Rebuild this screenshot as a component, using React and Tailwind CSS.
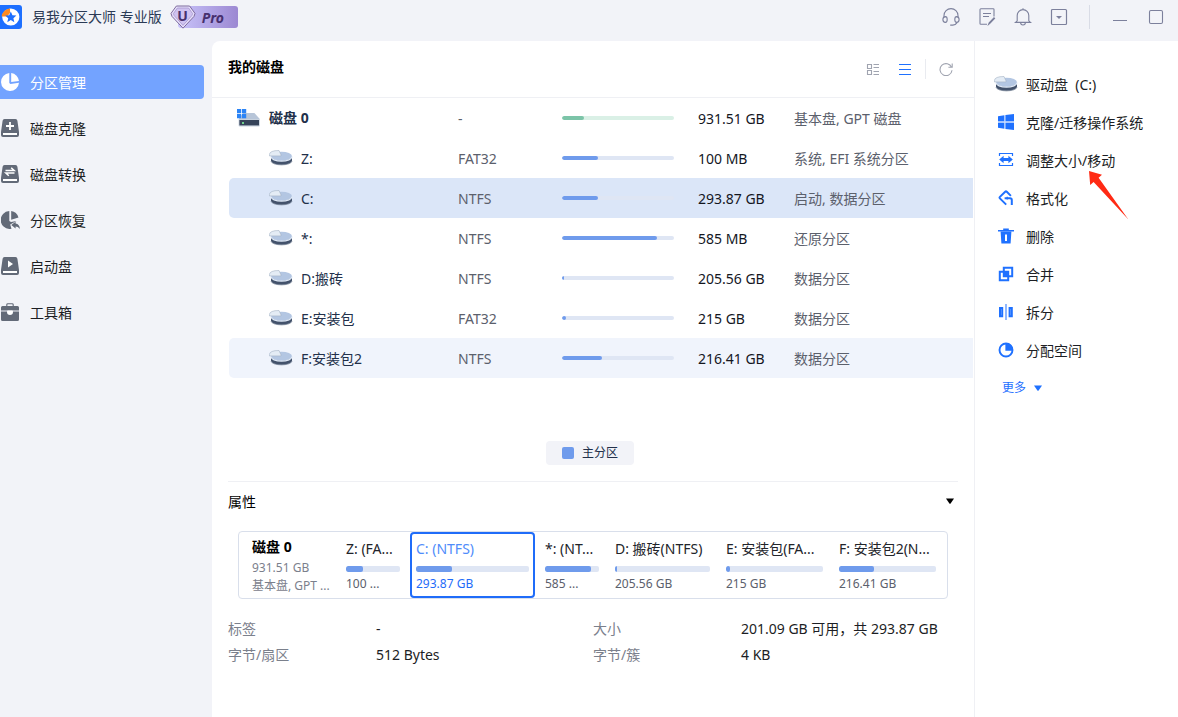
import React, { useState } from "react";

const SIDE_ITEMS = [
  { id: "manage", label: "分区管理", icon: PieIcon },
  { id: "clone", label: "磁盘克隆", icon: CloneIcon },
  { id: "convert", label: "磁盘转换", icon: ConvertIcon },
  { id: "recover", label: "分区恢复", icon: RecoverIcon },
  { id: "boot", label: "启动盘", icon: BootIcon },
  { id: "tools", label: "工具箱", icon: ToolboxIcon },
];

const PARTITIONS = [
  { id: "z", name: "Z:", fs: "FAT32", size: "100 MB", used: 32, type: "系统, EFI 系统分区" },
  { id: "c", name: "C:", fs: "NTFS", size: "293.87 GB", used: 32, type: "启动, 数据分区" },
  { id: "star", name: "*:", fs: "NTFS", size: "585 MB", used: 85, type: "还原分区" },
  { id: "d", name: "D:搬砖", fs: "NTFS", size: "205.56 GB", used: 2, type: "数据分区" },
  { id: "e", name: "E:安装包", fs: "FAT32", size: "215 GB", used: 4, type: "数据分区" },
  { id: "f", name: "F:安装包2", fs: "NTFS", size: "216.41 GB", used: 36, type: "数据分区" },
];

const SEGMENTS = [
  { id: "z", title: "Z: (FA...", size: "100 ...", used: 32, grow: "grow-[54]" },
  { id: "c", title: "C: (NTFS)", size: "293.87 GB", used: 32, grow: "grow-[113]" },
  { id: "star", title: "*: (NT...", size: "585 ...", used: 85, grow: "grow-[54]" },
  { id: "d", title: "D: 搬砖(NTFS)", size: "205.56 GB", used: 2, grow: "grow-[95]" },
  { id: "e", title: "E: 安装包(FA...", size: "215 GB", used: 4, grow: "grow-[97]" },
  { id: "f", title: "F: 安装包2(N...", size: "216.41 GB", used: 36, grow: "grow-[97]" },
];

const ACTIONS = [
  { label: "克隆/迁移操作系统", icon: WindowsIcon },
  { label: "调整大小/移动", icon: ResizeIcon, pointer: true },
  { label: "格式化", icon: FormatIcon },
  { label: "删除", icon: DeleteIcon },
  { label: "合并", icon: MergeIcon },
  { label: "拆分", icon: SplitIcon },
  { label: "分配空间", icon: AllocateIcon },
];

/* ---- sidebar icons ---- */

function PieIcon() {
  return (
    <svg width="18" height="18" viewBox="0 0 18 18" fill="currentColor" aria-hidden="true">
      <path d="M8.3 0A9 9 0 1 0 18 9.7L9.4 11 8.3 10Z" />
      <path d="M10.2 0A9 9 0 0 1 18 8L10.2 9Z" />
    </svg>
  );
}

function DiskBase({ children }) {
  return (
    <svg width="18" height="18" viewBox="0 0 18 18" aria-hidden="true">
      <path d="M3.6 0H14.4a2 2 0 0 1 2 1.7L18 13v3a2 2 0 0 1-2 2H2a2 2 0 0 1-2-2v-3L1.6 1.7A2 2 0 0 1 3.6 0Z" fill="currentColor" />
      <path d="M2 14H16V16H2Z" fill="#fff" />
      {children}
    </svg>
  );
}

function CloneIcon() {
  return (
    <DiskBase>
      <path d="M9 3V11M5 7H13" stroke="#fff" strokeWidth="1.8" />
    </DiskBase>
  );
}

function ConvertIcon() {
  return (
    <DiskBase>
      <path d="M4.5 5.6H13.2L10.2 2.8M13.5 8H4.8L7.8 10.8" fill="none" stroke="#fff" strokeWidth="1.5" />
    </DiskBase>
  );
}

function RecoverIcon() {
  return (
    <svg width="19" height="18" viewBox="0 0 19 18" fill="currentColor" aria-hidden="true">
      <path d="M8.3 0A9 9 0 0 0 9 18L10.5 17.8 9.2 13.5 15.5 9.9 10 11 8.3 10Z" />
      <path d="M10.2 0A9 9 0 0 1 17.5 6.4L10.2 8.8Z" />
      <path d="M10.3 14 14.6 10.7V12.6Q18.6 13.2 18.9 18 17 15.6 14.6 15.6V17.4Z" />
    </svg>
  );
}

function BootIcon() {
  return (
    <DiskBase>
      <path d="M7 3.6 12 7 7 10.4Z" fill="#fff" />
    </DiskBase>
  );
}

function ToolboxIcon() {
  return (
    <svg width="18" height="18" viewBox="0 0 18 18" aria-hidden="true">
      <path d="M5.8 3V1.6A1 1 0 0 1 6.8.7H11.2A1 1 0 0 1 12.2 1.6V3" fill="none" stroke="currentColor" strokeWidth="1.1" />
      <path d="M1.5 3H16.5A1.5 1.5 0 0 1 18 4.5V7.4H0V4.5A1.5 1.5 0 0 1 1.5 3Z" fill="currentColor" />
      <path d="M0 8.6H6V9A3 3 0 0 0 12 9V8.6H18V16.5A1.5 1.5 0 0 1 16.5 18H1.5A1.5 1.5 0 0 1 0 16.5Z" fill="currentColor" />
      <path d="M6.4 7.4H11.6V9A2.6 2.4 0 0 1 6.4 9Z" fill="#fff" />
    </svg>
  );
}

/* ---- action icons ---- */

function WindowsIcon() {
  return (
    <svg width="16" height="16" viewBox="0 0 16 16" fill="#1f71ff" aria-hidden="true">
      <path d="M0 2.2 6.4 1.3V7.2H0ZM7.4 1.1 16 0V7.2H7.4ZM0 8.7H6.4V14.7L0 13.8ZM7.4 8.7H16V16L7.4 14.9Z" />
      <path d="M0 7.2H16V8.7H0Z" opacity=".25" />
    </svg>
  );
}

function ResizeIcon() {
  return (
    <svg width="16" height="16" viewBox="0 0 16 16" aria-hidden="true">
      <path d="M1.5 4V1.5H14.5V4M1.5 11V13.5H14.5V11" fill="none" stroke="#1f71ff" strokeWidth="1.2" />
      <path d="M1.2 7.5 5.6 3.8V6H10.4V3.8L14.8 7.5 10.4 11.2V9H5.6V11.2Z" fill="#1f71ff" />
    </svg>
  );
}

function FormatIcon() {
  return (
    <svg width="16" height="16" viewBox="0 0 16 16" fill="none" stroke="#1f71ff" strokeWidth="2" aria-hidden="true">
      <path d="M8.2 14.6 1.9 8.4Q1.2 7.6 1.9 6.9L7.2 1.8Q8 1 8.8 1.8L12.9 5.9" />
      <path d="M6.6 8.2H12Q13.8 8.2 13.8 10V15" />
      <path d="M9.2 6.8V9.6" strokeWidth="1.2" />
    </svg>
  );
}

function DeleteIcon() {
  return (
    <svg width="16" height="16" viewBox="0 0 16 16" fill="#1f71ff" aria-hidden="true">
      <path d="M0 2H5.2V.6H10.8V2H16V3.4H0Z" />
      <path fillRule="evenodd" d="M2.6 3.4H13.4L12.6 15.4H3.4ZM7 6.4V13H9V6.4Z" />
    </svg>
  );
}

function MergeIcon() {
  return (
    <svg width="16" height="16" viewBox="0 0 16 16" aria-hidden="true">
      <path d="M5.8 1.8H14.2V10.2H5.8ZM1.8 5.8H10.2V14.2H1.8Z" fill="none" stroke="#1f71ff" strokeWidth="2" />
      <path d="M5.8 5.8H10.2V10.2H5.8Z" fill="#1f71ff" />
    </svg>
  );
}

function SplitIcon() {
  return (
    <svg width="16" height="16" viewBox="0 0 16 16" aria-hidden="true">
      <path d="M2 4H4.2V12.2H2ZM11.6 4H13.8V12.2H11.6Z" fill="none" stroke="#1f71ff" strokeWidth="2" />
      <path d="M7 0H9V16H7Z" fill="#8fb8ff" />
    </svg>
  );
}

function AllocateIcon() {
  return (
    <svg width="16" height="16" viewBox="0 0 16 16" aria-hidden="true">
      <circle cx="8" cy="8" r="6.5" fill="none" stroke="#1f71ff" strokeWidth="1.9" />
      <path d="M7.4 1H9A7 7 0 0 1 15 8.8H7.4Z" fill="#1f71ff" />
    </svg>
  );
}

/* ---- disk drawings ---- */

function DriveIcon() {
  return (
    <svg width="24" height="16" viewBox="0 0 24 16" className="shrink-0" aria-hidden="true">
      <path d="M2 6.8V11A10.6 4.4 0 0 0 23 11V6.8Z" fill="#43526b" />
      <path d="M2 11.4A10.6 4 0 0 0 23 11.4" fill="none" stroke="#66748a" strokeWidth=".7" />
      <ellipse cx="12.5" cy="6.3" rx="10.5" ry="4.6" fill="#b3c6e2" />
      <path d="M2 6.6A10.5 4.6 0 0 0 23 6.6" fill="none" stroke="#dfe9f6" strokeWidth="1.2" />
      <path d="M.4 4.4Q.8 .5 10 .5L12 4.8V5.9H.4Z" fill="#e4ecf5" stroke="#a3b2c4" strokeWidth=".6" />
    </svg>
  );
}

function DiskIcon() {
  return (
    <svg width="24" height="18" viewBox="0 0 24 18" className="shrink-0" aria-hidden="true">
      <path d="M6 4H17.4L22.8 10H1.6Z" fill="#b7c5d8" />
      <path d="M1.6 10H22.8V16.6A1 1 0 0 1 21.8 17.6H2.6A1 1 0 0 1 1.6 16.6Z" fill="#c8d2de" />
      <path d="M2.4 11H22V16.4H2.4Z" fill="#364359" />
      <path d="M5 13H7V15H5Z" fill="#6fd08c" />
      <path d="M0 0H4.2V4.2H0ZM5 0H9.2V4.2H5ZM0 5H4.2V9.2H0ZM5 5H9.2V9.2H5Z" fill="#2b84f6" />
    </svg>
  );
}

function Logo() {
  return (
    <svg width="22" height="24" viewBox="2 0 22 24" aria-hidden="true">
      <rect width="24" height="24" rx="3" fill="#1d6fff" />
      <circle cx="12.8" cy="12" r="8.6" fill="#fff" />
      <path d="M3.6 11.6A9 9 0 0 1 12 3.4V8L9 11.6Z" fill="#ff8a1e" />
      <path d="M12.8 6.6 14.4 10.2 18.4 10.6 15.4 13.2 16.3 17.2 12.8 15.1 9.3 17.2 10.2 13.2 7.2 10.6 11.2 10.2Z" fill="#1d6fff" />
    </svg>
  );
}

function ProBadge() {
  return (
    <span className="relative ml-2 flex h-6 items-center pl-2">
      <span className="flex h-[22px] items-center rounded-[3px] bg-linear-to-r from-[#c9c4fa] to-[#9c88d2] pr-[14px] pl-6 text-[14px] font-bold text-[#47306e] italic">
        Pro
      </span>
      <span className="absolute top-0 left-0 flex h-6 w-[26px] justify-center">
        <svg width="26" height="24" viewBox="0 0 26 24" className="absolute inset-0" aria-hidden="true">
          <path d="M6.4 1H19.6L25 8.4 24 11.4 13 23.2 2 11.4 1 8.4Z" fill="#e7e0fb" stroke="#7d6a9c" />
          <path d="M7.4 3H18.6L22.6 8.6 21.8 10.6 13 20.4 4.2 10.6 3.4 8.6Z" fill="#cfc2f0" stroke="#a595cb" strokeWidth=".8" />
        </svg>
        <span className="relative text-[14px] leading-[21px] font-bold text-[#47306e]">U</span>
      </span>
    </span>
  );
}

function Triangle({ className }) {
  return (
    <svg width="8" height="6" viewBox="0 0 8 6" fill="currentColor" className={className} aria-hidden="true">
      <path d="M0 .4H8L4.6 5.4Q4 6 3.4 5.4Z" />
    </svg>
  );
}

function Meter({ used, green, thick }) {
  const track = green ? "bg-[#daf0e6]" : "bg-[#dfe6f4]";
  const fill = green ? "bg-[#7cc4a8]" : "bg-[#6f9bec]";
  return (
    <div className={`w-full overflow-hidden rounded-[2px] ${thick ? "h-[6px]" : "h-1"} ${track}`}>
      <div className={`h-full rounded-[2px] ${fill}`} style={{ width: `${used}%` }} />
    </div>
  );
}

function TitleBar() {
  return (
    <header className="flex h-[41px] items-start justify-between pt-[5px]">
      <div className="flex h-6 items-center">
        <Logo />
        <h1 className="ml-[10px] pb-[2px] text-[14px] text-[#2b3a55]">易我分区大师 专业版</h1>
        <ProBadge />
      </div>
      <div className="flex h-6 items-center gap-[18px] pr-[13px] text-[#7c809c]">
        <button type="button" aria-label="客服">
          <svg width="18" height="18" viewBox="0 0 18 18" fill="none" stroke="currentColor" strokeWidth="1.1" aria-hidden="true">
            <path d="M2 9.2V7.6A7 7 0 0 1 16 7.6V9.2" />
            <path d="M3.4 8.6C1.6 8.8 .9 10 .9 11.4S2 14.2 3.4 14.4C4.8 14.4 5.2 13.6 5.2 11.5S4.8 8.6 3.4 8.6ZM14.6 8.6C16.4 8.8 17.1 10 17.1 11.4S16 14.2 14.6 14.4C13.2 14.4 12.8 13.6 12.8 11.5S13.2 8.6 14.6 8.6Z" />
            <path d="M15 14.6Q13.6 17 10.8 17.1H8.2" />
          </svg>
        </button>
        <button type="button" aria-label="反馈">
          <svg width="18" height="18" viewBox="0 0 18 18" fill="none" stroke="currentColor" strokeWidth="1.1" aria-hidden="true">
            <path d="M16 8.4V1.6A.8 .8 0 0 0 15.2 .8H2.8A.8 .8 0 0 0 2 1.6V15.4A.8 .8 0 0 0 2.8 16.2H9" />
            <path d="M5 5.5H13M5 8.5H11" />
            <path d="M16.6 10.4 11.8 15.4 10.6 16.4 11.2 14.8 16 9.8Z" fill="currentColor" />
          </svg>
        </button>
        <button type="button" aria-label="通知">
          <svg width="18" height="18" viewBox="0 0 18 18" fill="none" stroke="currentColor" strokeWidth="1.1" aria-hidden="true">
            <path d="M9 .2V1.6M3.2 12.8V7.4A5.8 5.8 0 0 1 14.8 7.4V12.8L16.6 14.4H1.4Z" />
            <path d="M6.6 14.6A2.4 2.4 0 0 0 11.4 14.6" />
          </svg>
        </button>
        <button type="button" aria-label="菜单">
          <svg width="18" height="18" viewBox="0 0 18 18" fill="none" stroke="currentColor" strokeWidth="1.2" aria-hidden="true">
            <rect x="1.5" y="1.5" width="15" height="15" rx="1" />
            <path d="M6 8H12L9 11Z" fill="currentColor" stroke="none" />
          </svg>
        </button>
        <span className="mx-[3px] h-6 w-px bg-[#d9dce6]" />
        <button type="button" aria-label="最小化">
          <svg width="18" height="18" viewBox="0 0 18 18" stroke="currentColor" aria-hidden="true">
            <path d="M2 12.5H16" />
          </svg>
        </button>
        <button type="button" aria-label="最大化">
          <svg width="18" height="18" viewBox="0 0 18 18" fill="none" stroke="currentColor" strokeWidth="1.1" aria-hidden="true">
            <rect x="2.5" y="2.5" width="13" height="13" rx="1.4" />
          </svg>
        </button>
      </div>
    </header>
  );
}

function Sidebar({ active, onSelect }) {
  return (
    <nav className="w-[212px] shrink-0 pt-6 pr-2">
      <ul className="space-y-3">
        {SIDE_ITEMS.map(({ id, label, icon: Icon }) => (
          <li key={id}>
            <a
              href={`#${id}`}
              onClick={() => onSelect(id)}
              className={`flex h-[34px] items-center rounded-r pl-px text-[14px] ${
                active === id ? "bg-[#73a3ff] text-white" : "text-[#1c1e24]"
              }`}
            >
              <span className={`w-[29px] ${active === id ? "text-white" : "text-[#636a78]"}`}>
                <Icon />
              </span>
              {label}
            </a>
          </li>
        ))}
      </ul>
    </nav>
  );
}

function PartitionTable({ selected, onSelect }) {
  return (
    <table className="w-full table-fixed text-left text-[14px] leading-5">
      <colgroup>
        <col className="w-[229px]" />
        <col className="w-[104px]" />
        <col className="w-[136px]" />
        <col className="w-24" />
        <col />
      </colgroup>
      <tbody>
        <tr className="h-10">
          <td className="pl-2">
            <span className="flex items-center gap-2 font-bold text-[#22304a]">
              <DiskIcon />
              磁盘 0
            </span>
          </td>
          <td className="pt-[2px] text-[#5b606c]">-</td>
          <td className="pr-6">
            <Meter used={20} green />
          </td>
          <td className="pt-[2px] text-[#14171f]">931.51 GB</td>
          <td className="pt-[2px] text-[#5b606c]">基本盘, GPT 磁盘</td>
        </tr>
        {PARTITIONS.map((part) => (
          <tr
            key={part.id}
            onClick={() => onSelect(part.id)}
            className={`h-10 ${selected === part.id ? "bg-[#dbe6f8]" : part.id === "f" ? "bg-[#f0f4fc]" : ""}`}
          >
            <td className="rounded-l-[5px] pl-10">
              <span className="flex items-center gap-2 text-[#22304a]">
                <DriveIcon />
                <span className="pt-[2px]">{part.name}</span>
              </span>
            </td>
            <td className="pt-[2px] text-[#5b606c]">{part.fs}</td>
            <td className="pr-6">
              <Meter used={part.used} />
            </td>
            <td className="pt-[2px] text-[#14171f]">{part.size}</td>
            <td className="pt-[2px] text-[#5b606c]">{part.type}</td>
          </tr>
        ))}
      </tbody>
    </table>
  );
}

function DiskMap({ selected, onSelect }) {
  return (
    <div className="mx-[10px] flex rounded-[4px] border border-[#d9dfeb] pr-[5px]">
      <div className="w-[101px] shrink-0 pt-[5px] pl-[13px] text-[12px] leading-[18px] whitespace-nowrap text-[#7b808c]">
        <p className="mb-[2px] text-[14px] leading-5 font-bold text-black">磁盘 0</p>
        <p>931.51 GB</p>
        <p>基本盘, GPT ...</p>
      </div>
      <div className="flex min-w-0 flex-1 gap-1">
        {SEGMENTS.map((seg) => {
          const on = selected === seg.id;
          return (
            <button
              key={seg.id}
              type="button"
              onClick={() => onSelect(seg.id)}
              className={`${seg.grow} flex h-[66px] min-w-0 basis-0 flex-col rounded-[4px] border-2 px-1 pt-[5px] text-left whitespace-nowrap ${
                on ? "border-[#1f6cf9] text-[#1f6cf9]" : "border-transparent text-[#22242a]"
              }`}
            >
              <span className={`mb-[7px] text-[14px] leading-5 ${on ? "text-[#4f8cfb]" : ""}`}>{seg.title}</span>
              <Meter used={seg.used} thick />
              <span className={`mt-1 text-[12px] leading-4 ${on ? "" : "text-[#5b606c]"}`}>{seg.size}</span>
            </button>
          );
        })}
      </div>
    </div>
  );
}

function ActionPanel() {
  return (
    <aside className="w-[204px] shrink-0 border-l border-[#eff0f4] bg-white pt-6 pl-[19px]">
      <h2 className="flex h-[38px] items-center gap-2 text-[14px] text-[#1c1e24]">
        <DriveIcon />
        驱动盘&nbsp; (C:)
      </h2>
      {ACTIONS.map(({ label, icon: Icon, pointer }) => (
        <button key={label} type="button" className="relative flex h-[38px] w-full items-center gap-2 text-left text-[14px] text-[#1c1e24]">
          <span className="flex w-6 justify-center">
            <Icon />
          </span>
          {label}
          {pointer && (
            <svg width="40" height="49" viewBox="0 0 40 49" className="absolute top-[30px] left-[95px]" aria-hidden="true">
              <path d="M0 0 13 3.8 9.6 6.8 39.4 48.6 4.6 11 1.2 14Z" fill="#ff2a14" />
            </svg>
          )}
        </button>
      ))}
      <button type="button" className="flex h-[38px] items-center gap-2 pl-2 text-[12px] text-[#1f71ff]">
        更多
        <Triangle />
      </button>
    </aside>
  );
}

export default function App() {
  const [page, setPage] = useState("manage");
  const [selected, setSelected] = useState("c");
  const [open, setOpen] = useState(true);

  return (
    <div className="flex min-h-screen flex-col bg-[#f2f3f8] font-['Noto_Sans','Noto_Sans_CJK_SC',sans-serif]">
      <TitleBar />
      <div className="flex flex-1">
        <Sidebar active={page} onSelect={setPage} />

        <main className="min-w-0 flex-1 rounded-tl-lg bg-white">
          <div className="flex h-[57px] items-center justify-between border-b border-[#eff0f4] pr-[21px] pl-4">
            <h2 className="pb-[6px] text-[14px] font-bold text-black">我的磁盘</h2>
            <div className="flex items-center text-[#a0a4b0]">
              <button type="button" aria-label="卡片视图">
                <svg width="14" height="14" viewBox="0 0 14 14" fill="none" stroke="currentColor" strokeWidth="1.1" aria-hidden="true">
                  <path d="M1.5 2.5H5.5V6.5H1.5ZM1.5 8.5H5.5V12.5H1.5ZM7.5 2.5H13M7.5 5.5H13M7.5 9.5H13M7.5 12.5H13" />
                </svg>
              </button>
              <button type="button" aria-label="列表视图" className="ml-[18px] text-[#1f71ff]">
                <svg width="14" height="14" viewBox="0 0 14 14" stroke="currentColor" strokeWidth="1.2" aria-hidden="true">
                  <path d="M1 2.5H13M1 7.5H13M1 12.5H13" />
                </svg>
              </button>
              <span className="mx-[13px] h-5 w-px bg-[#e9ebf0]" />
              <button type="button" aria-label="刷新">
                <svg width="14" height="14" viewBox="0 0 14 14" fill="none" stroke="currentColor" strokeWidth="1.1" aria-hidden="true">
                  <path d="M12.6 5.4A6 6 0 1 0 13 8.2M13.2 1.4V5.2H9.4" />
                </svg>
              </button>
            </div>
          </div>

          <div className="pr-px pl-[17px]">
            <PartitionTable selected={selected} onSelect={setSelected} />
          </div>

          <div className="mt-[63px] flex justify-center pr-[6px]">
            <span className="flex h-6 items-center gap-2 rounded-[4px] bg-[#f2f3f8] px-4 text-[12px] text-[#22304a]">
              <i className="size-3 rounded-[2px] bg-[#6f9bec]" />
              主分区
            </span>
          </div>

          <section className="mx-4 mt-4 border-t border-[#eff0f4]">
            <button
              type="button"
              aria-expanded={open}
              onClick={() => setOpen(!open)}
              className="flex h-[38px] w-full items-center justify-between pr-1 text-[14px] text-black"
            >
              属性
              <Triangle className={open ? "" : "-rotate-90"} />
            </button>
            {open && (
              <>
                <div className="pt-[11px]">
                  <DiskMap selected={selected} onSelect={setSelected} />
                </div>
                <dl className="mt-[17px] grid grid-cols-[148px_1fr_148px_1fr] text-[14px] leading-[26px] text-[#1c1e24]">
                  <dt className="text-[#7b808c]">标签</dt>
                  <dd>-</dd>
                  <dt className="text-[#7b808c]">大小</dt>
                  <dd>201.09 GB 可用，共 293.87 GB</dd>
                  <dt className="text-[#7b808c]">字节/扇区</dt>
                  <dd>512 Bytes</dd>
                  <dt className="text-[#7b808c]">字节/簇</dt>
                  <dd>4 KB</dd>
                </dl>
              </>
            )}
          </section>
        </main>

        <ActionPanel />
      </div>
    </div>
  );
}
